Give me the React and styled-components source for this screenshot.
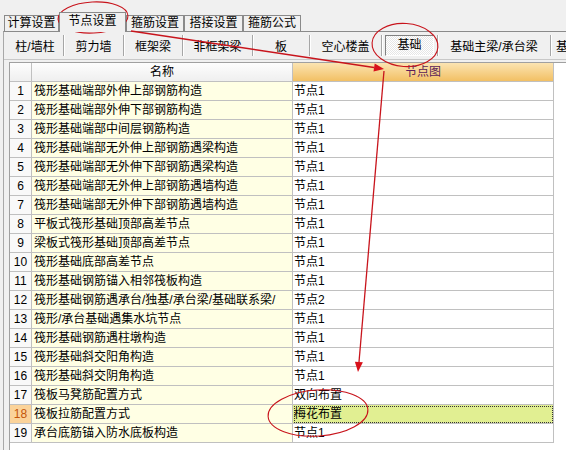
import React from 'react';
import styled, { createGlobalStyle } from 'styled-components';

const Global = createGlobalStyle`
  html, body {
    margin: 0;
    padding: 0;
    background: #f0f0f0;
  }
`;

const Page = styled.div`
  position: relative;
  width: 566px;
  height: 450px;
  overflow: hidden;
  display: flex;
  flex-direction: column;
  background: #f0f0f0;
  color: #000;
  font-family: "Liberation Sans", "Noto Sans CJK SC", sans-serif;
  font-size: 12px;
`;

const TopTabs = styled.div`
  display: flex;
  align-items: flex-end;
  height: 31px;
  padding-left: 4px;
  box-sizing: border-box;
  flex-shrink: 0;
`;

const TopTab = styled.div`
  position: relative;
  z-index: ${p => (p.$active ? 1 : 0)};
  width: ${p => p.$w}px;
  height: ${p => (p.$active ? 20 : 16)}px;
  margin-bottom: ${p => (p.$active ? -1 : 0)}px;
  box-sizing: border-box;
  border: 1px solid #8a8a8a;
  border-bottom: none;
  background: #f0f0f0;
  text-align: center;
  line-height: ${p => (p.$active ? 17 : 15)}px;
  white-space: nowrap;
  flex-shrink: 0;
`;

const Panel = styled.div`
  flex: 1;
  min-height: 0;
  margin-left: 3px;
  display: flex;
  flex-direction: column;
  border-top: 1px solid #8a8a8a;
  border-left: 1px solid #a8a8a8;
`;

const SubTabs = styled.div`
  display: flex;
  align-items: center;
  height: 28px;
  padding-left: 3px;
  box-sizing: border-box;
  border-bottom: 1px solid #c8c8c8;
  flex-shrink: 0;
  overflow: hidden;
`;

const SubTab = styled.div`
  width: ${p => (p.$w ? `${p.$w}px` : 'auto')};
  height: 21px;
  box-sizing: border-box;
  display: flex;
  align-items: center;
  justify-content: ${p => (p.$w ? 'center' : 'flex-start')};
  padding-left: ${p => (p.$w ? 0 : 5)}px;
  border-right: ${p => (p.$w ? '1px solid #a6a6a6' : 'none')};
  box-shadow: ${p => (p.$w ? '1px 0 0 #ffffff' : 'none')};
  white-space: nowrap;
  flex-shrink: 0;
`;

const ActiveBox = styled.span`
  padding: 0 11px;
  line-height: 19px;
  border: 1px solid;
  border-color: #808080 #ffffff #ffffff #808080;
  background-color: #f4f4f4;
  background-image: repeating-conic-gradient(#ffffff 0 25%, #e6e6e6 0 50%);
  background-size: 2px 2px;
`;

const Grid = styled.div`
  flex: 1;
  margin: 2px 0 0 5px;
  background: #ffffff;
  border-top: 1px solid #a0a0a0;
  border-left: 1px solid #a0a0a0;
`;

const Row = styled.div`
  display: grid;
  grid-template-columns: 22px 261px 261px;
  height: 19px;
`;

const Cell = styled.div`
  box-sizing: border-box;
  border-right: 1px solid #c0c0c0;
  border-bottom: 1px solid #c0c0c0;
  line-height: 18px;
  white-space: nowrap;
  overflow: hidden;
`;

const HeadCell = styled(Cell)`
  text-align: center;
  background: linear-gradient(#fdfdfd, #efefef);
`;

const NodeHead = styled(Cell)`
  text-align: center;
  color: #5a1d58;
  background: linear-gradient(#fbe4b2, #f2c064);
`;

const NumCell = styled(Cell)`
  text-align: center;
  background: ${p => (p.$sel ? '#fbd39a' : '#f9f9f9')};
  color: ${p => (p.$sel ? '#c4560a' : '#000')};
`;

const NameCell = styled(Cell)`
  padding-left: 2px;
  background: #ffffe4;
`;

const NodeCell = styled(Cell)`
  padding-left: 1px;
  background: ${p => (p.$sel ? '#e1ef92' : '#ffffff')};
  outline: ${p => (p.$sel ? '1px dotted #333' : 'none')};
  outline-offset: -2px;
`;

const Marks = styled.svg`
  position: absolute;
  left: 0;
  top: 0;
  pointer-events: none;
`;

const topTabs = [
  ['计算设置', 55],
  ['节点设置', 67, true],
  ['箍筋设置', 58],
  ['搭接设置', 59],
  ['箍筋公式', 58],
];

const subTabs = [
  ['柱/墙柱', 57],
  ['剪力墙', 60],
  ['框架梁', 59],
  ['非框架梁', 70],
  ['板', 57],
  ['空心楼盖', 72],
  ['基础', 56, true],
  ['基础主梁/承台梁', 113],
  ['基础次梁'],
];

const rows = [
  ['筏形基础端部外伸上部钢筋构造', '节点1'],
  ['筏形基础端部外伸下部钢筋构造', '节点1'],
  ['筏形基础端部中间层钢筋构造', '节点1'],
  ['筏形基础端部无外伸上部钢筋遇梁构造', '节点1'],
  ['筏形基础端部无外伸下部钢筋遇梁构造', '节点1'],
  ['筏形基础端部无外伸上部钢筋遇墙构造', '节点1'],
  ['筏形基础端部无外伸下部钢筋遇墙构造', '节点1'],
  ['平板式筏形基础顶部高差节点', '节点1'],
  ['梁板式筏形基础顶部高差节点', '节点1'],
  ['筏形基础底部高差节点', '节点1'],
  ['筏形基础钢筋锚入相邻筏板构造', '节点1'],
  ['筏形基础钢筋遇承台/独基/承台梁/基础联系梁/', '节点2'],
  ['筏形/承台基础遇集水坑节点', '节点1'],
  ['筏形基础钢筋遇柱墩构造', '节点1'],
  ['筏形基础斜交阳角构造', '节点1'],
  ['筏形基础斜交阴角构造', '节点1'],
  ['筏板马凳筋配置方式', '双向布置'],
  ['筏板拉筋配置方式', '梅花布置'],
  ['承台底筋锚入防水底板构造', '节点1'],
];

export default function App() {
  return (
    <>
      <Global />
      <Page>
        <TopTabs>
          {topTabs.map(([label, w, active]) => (
            <TopTab key={label} $w={w} $active={active}>{label}</TopTab>
          ))}
        </TopTabs>
        <Panel>
          <SubTabs>
            {subTabs.map(([label, w, active]) => (
              <SubTab key={label} $w={w}>
                {active ? <ActiveBox>{label}</ActiveBox> : label}
              </SubTab>
            ))}
          </SubTabs>
          <Grid>
            <Row>
              <HeadCell />
              <HeadCell>名称</HeadCell>
              <NodeHead>节点图</NodeHead>
            </Row>
            {rows.map(([name, node], i) => {
              const sel = i === 17;
              return (
                <Row key={i}>
                  <NumCell $sel={sel}>{i + 1}</NumCell>
                  <NameCell>{name}</NameCell>
                  <NodeCell $sel={sel}>{node}</NodeCell>
                </Row>
              );
            })}
          </Grid>
        </Panel>

        {/* red hand-drawn annotations */}
        <Marks width="566" height="450" viewBox="0 0 566 450">
          <g fill="none" stroke="#c8141c" strokeWidth="1.1">
            <ellipse cx="93" cy="17.5" rx="35" ry="15.5" transform="rotate(-3 93 17.5)" />
            <ellipse cx="405" cy="45" rx="33" ry="21.5" transform="rotate(4 405 45)" />
            <ellipse cx="318" cy="413" rx="50" ry="23" transform="rotate(-4 318 413)" />
            <line x1="131" y1="31" x2="374" y2="67.5" strokeWidth="1.3" />
            <line x1="384" y1="71" x2="359" y2="362" strokeWidth="1.3" />
          </g>
          <g fill="#d8101a">
            <polygon points="384,69 374.7,63.5 373.5,71.5" />
            <polygon points="358,372 362.9,362.3 354.9,361.7" />
          </g>
        </Marks>
      </Page>
    </>
  );
}
